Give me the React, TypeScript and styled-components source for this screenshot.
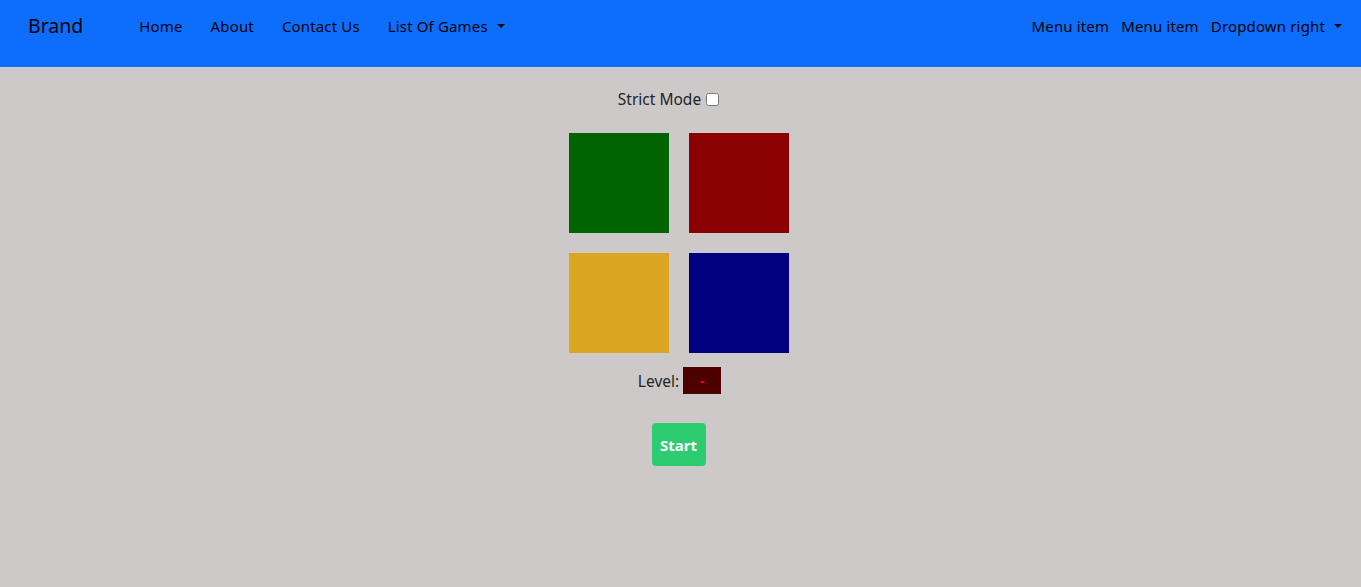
import React from "react";
import styled, { createGlobalStyle } from "styled-components";

const Global = createGlobalStyle`
  html, body { margin: 0; padding: 0; }
  body {
    background: #cdc9c8;
    font-family: "Noto Sans", "Open Sans", sans-serif;
    color: #212529;
    font-size: 16px;
  }
`;

const Nav = styled.nav`
  height: 67px;
  background: #0d6efd;
  display: flex;
  align-items: center;
  padding: 0 19px 0 28px;
  box-sizing: border-box;
`;

const Brand = styled.a`
  font-size: 19.5px;
  color: #000;
  margin-right: 56px;
  margin-top: -16px;
`;

const Links = styled.div<{ $gap: number }>`
  display: flex;
  align-items: center;
  margin-top: -16px;
  gap: ${(p) => p.$gap}px;
`;

const Link = styled.a`
  font-size: 15px;
  letter-spacing: 0.15px;
  color: #000;
  display: inline-flex;
  align-items: center;
  white-space: nowrap;
`;

const Caret = styled.span`
  display: inline-block;
  margin-left: 9px;
  width: 0;
  height: 0;
  border-left: 4px solid transparent;
  border-right: 4px solid transparent;
  border-top: 4.5px solid #000;
`;

const Spacer = styled.div`
  flex: 1;
`;

const Main = styled.main`
  display: flex;
  flex-direction: column;
  align-items: center;
  padding-top: 22px;
  padding-right: 4px;
`;

const StrictRow = styled.label`
  display: flex;
  align-items: center;
  gap: 5px;
  font-size: 15.5px;
  height: 22px;
  margin-right: 20px;
  margin-top: -1px;
`;

const Check = styled.input`
  margin: 0;
  width: 13px;
  height: 13px;
`;

const Board = styled.div`
  margin-top: 23px;
  display: grid;
  grid-template-columns: 100px 100px;
  gap: 20px;
`;

const Pad = styled.div<{ $c: string }>`
  width: 100px;
  height: 100px;
  background: ${(p) => p.$c};
`;

const LevelRow = styled.div`
  margin-top: 14px;
  margin-left: 2px;
  display: flex;
  align-items: center;
  gap: 4px;
  font-size: 15.5px;
`;

const LevelBox = styled.div`
  width: 38px;
  height: 27px;
  background: #4d0000;
  color: #ff0000;
  display: flex;
  align-items: center;
  justify-content: center;
  font-weight: bold;
  font-size: 14px;
`;

const StartBtn = styled.button`
  margin-top: 29px;
  width: 54px;
  height: 43px;
  border: none;
  border-radius: 4px;
  background: #2ecc71;
  color: #fff;
  font-family: inherit;
  font-weight: bold;
  font-size: 15px;
  padding: 0;
`;

export default function App() {
  return (
    <>
      <Global />
      <Nav>
        <Brand>Brand</Brand>
        <Links $gap={28}>
          <Link>Home</Link>
          <Link>About</Link>
          <Link>Contact Us</Link>
          <Link>
            List Of Games<Caret />
          </Link>
        </Links>
        <Spacer />
        <Links $gap={12}>
          <Link>Menu item</Link>
          <Link>Menu item</Link>
          <Link>
            Dropdown right<Caret />
          </Link>
        </Links>
      </Nav>
      <Main>
        <StrictRow>
          Strict Mode <Check type="checkbox" />
        </StrictRow>
        <Board>
          <Pad $c="#006400" />
          <Pad $c="#8b0000" />
          <Pad $c="#daa520" />
          <Pad $c="#000080" />
        </Board>
        <LevelRow>
          Level: <LevelBox>-</LevelBox>
        </LevelRow>
        <StartBtn>Start</StartBtn>
      </Main>
    </>
  );
}
